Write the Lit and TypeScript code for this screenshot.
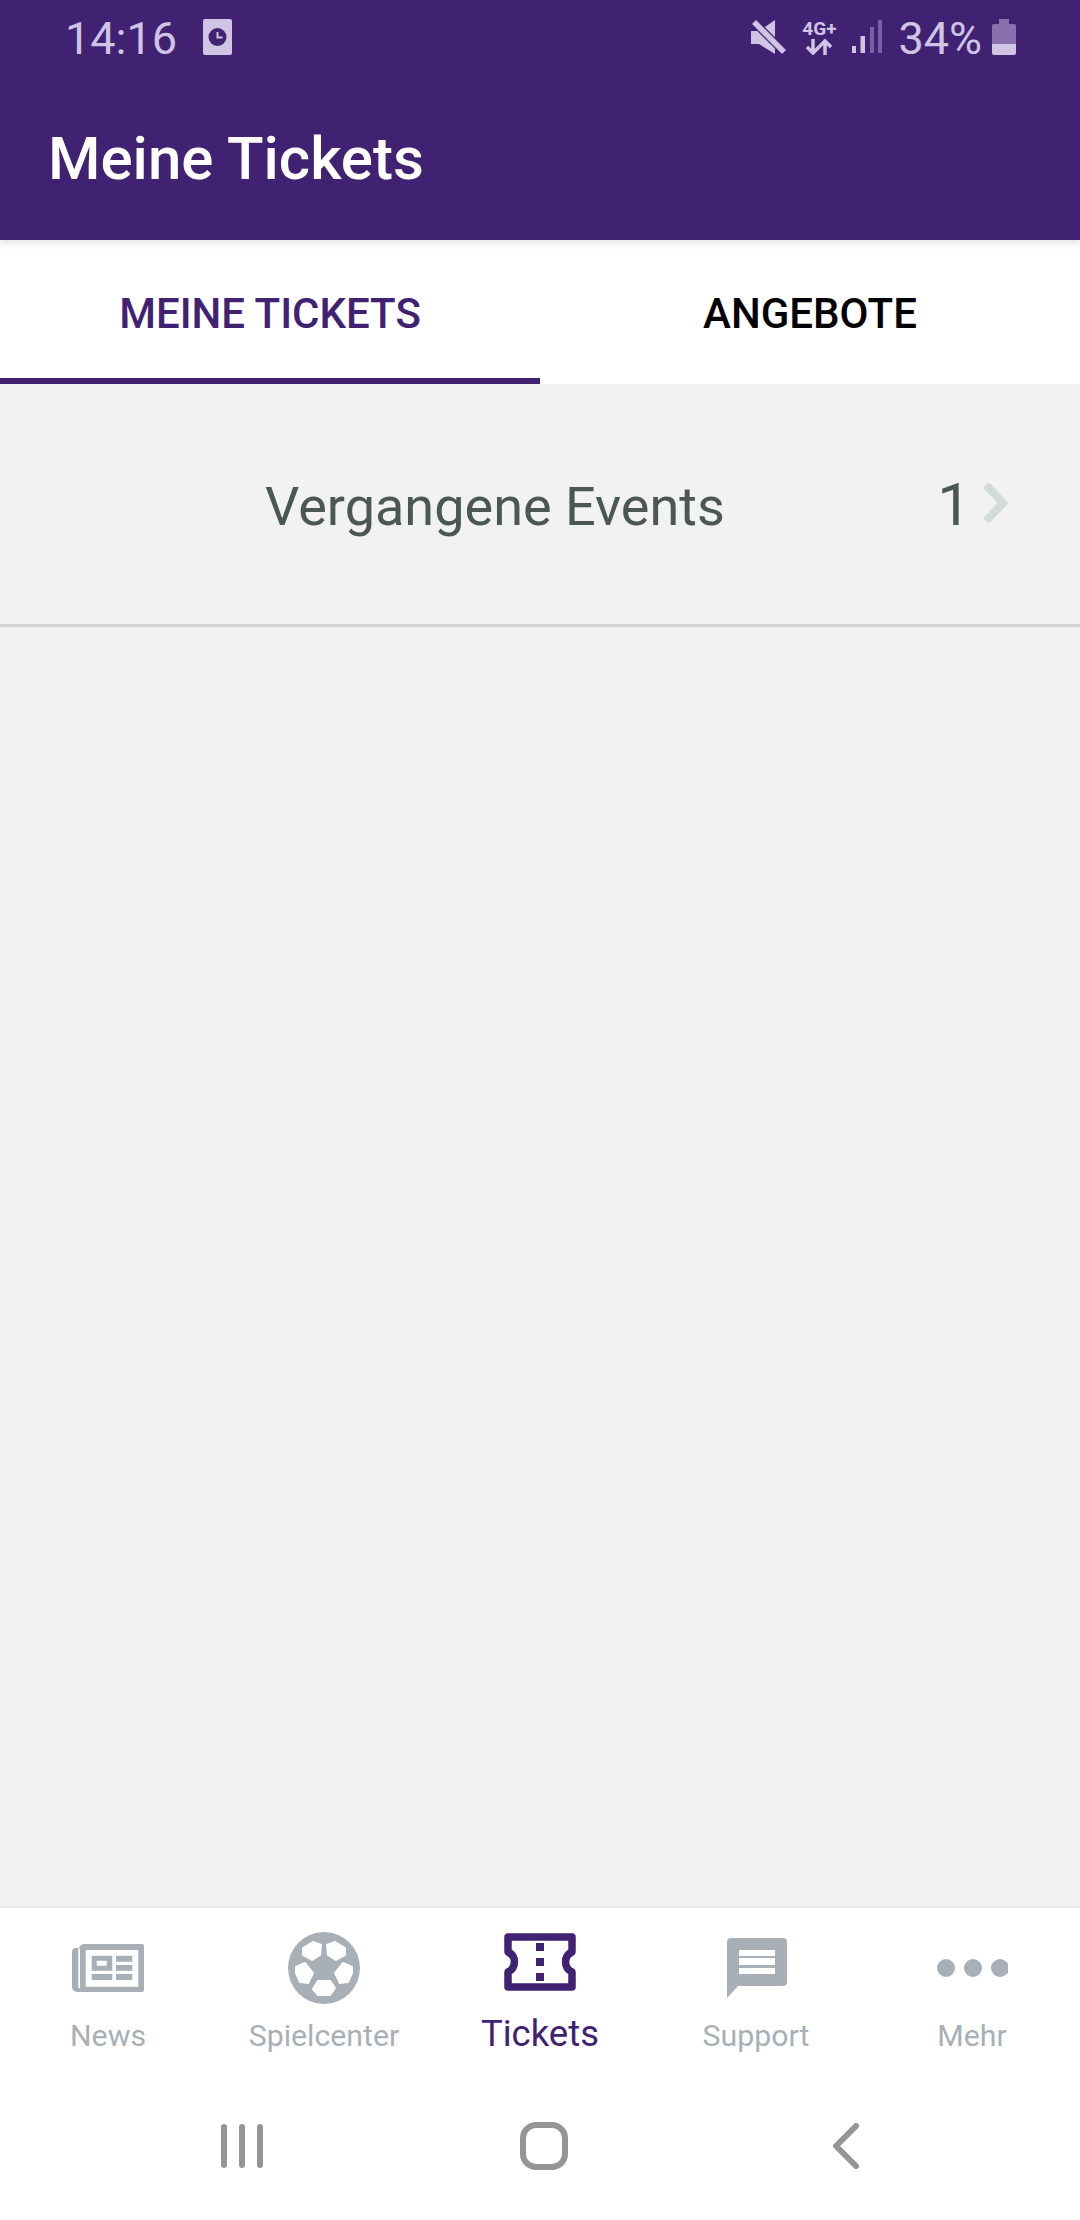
import { LitElement, html, css, svg } from "lit";
import { customElement } from "lit/decorators.js";

const news = svg`<path fill="currentColor" fill-rule="evenodd" d="M11 12H70a2 2 0 0 1 2 2V58a2 2 0 0 1-2 2H5a5 5 0 0 1-5-5V20a4 4 0 0 1 4-4H7Q8 13 11 12ZM6.3 16.5V56H8V16.5ZM13.7 18V54.7H66.3V18ZM19.7 23.7H40.3V38.7H19.7ZM24.7 28.7V33.7H34.7V28.7ZM44 23.7H60.3V29.7H44ZM44 33H60.3V38.7H44ZM19.7 42H40.3V48H19.7ZM44 42H60.3V48H44Z"/>`;
const ball = svg`<circle cx="36" cy="36" r="36" fill="currentColor"/>
<g fill="#fff" stroke="#fff" stroke-width="2" stroke-linejoin="round">
<polygon points="25,10 33,13 32,23 24,28 15,23 15,16"/>
<polygon points="47,10 39,13 40,23 48,28 57,23 57,16"/>
<polygon points="8,35 17,31 25,41 20,51 12,50 8,41"/>
<polygon points="64,35 55,31 47,41 52,51 60,50 64,41"/>
<polygon points="30,49 42,49 47,56 42,63 30,63 25,57"/>
</g>`;
const ticket = svg`<path fill="none" stroke="currentColor" stroke-width="7.5" stroke-linejoin="round" d="M4 5H68V20A11 11 0 0 0 68 40V55H4V40A11 11 0 0 0 4 20Z"/>
<g fill="currentColor"><rect x="32" y="11" width="8" height="8"/><rect x="32" y="26" width="8" height="8"/><rect x="32" y="41" width="8" height="8"/></g>`;
const support = svg`<path fill="currentColor" fill-rule="evenodd" transform="translate(1 0)" d="M10 6H62a4 4 0 0 1 4 4V50a4 4 0 0 1-4 4H17L6 66V10a4 4 0 0 1 4-4ZM18 18V24H54V18ZM18 26V33H54V26ZM18 36V42H54V36Z"/>`;
const more = svg`<g fill="currentColor"><circle cx="10" cy="36" r="9"/><circle cx="37" cy="36" r="9"/><circle cx="64" cy="36" r="9"/></g>`;

const items = [
  { label: "News", icon: news },
  { label: "Spielcenter", icon: ball },
  { label: "Tickets", icon: ticket, active: true },
  { label: "Support", icon: support },
  { label: "Mehr", icon: more },
];

@customElement("app-root")
export class AppRoot extends LitElement {
  static styles = css`
    :host {
      display: flex;
      flex-direction: column;
      width: 1080px;
      height: 2220px;
      background: #f2f2f2;
      font-family: Roboto, "Liberation Sans", sans-serif;
      overflow: hidden;
    }
    .header {
      background: #412272;
      height: 240px;
      flex: none;
      position: relative;
      z-index: 2;
      box-shadow: 0 3px 8px rgba(0, 0, 0, 0.12);
    }
    .status {
      display: flex;
      align-items: center;
      height: 38px;
      padding: 18px 64px 0 65px;
      color: #cfc4e3;
    }
    .time { font-size: 45px; font-weight: 400; line-height: 38px; margin-top: 3px; }
    .clock { margin-left: 26px; display: block; }
    .spacer { flex: 1; }
    .mute { display: block; margin-right: 14px; }
    .net { display: flex; flex-direction: column; align-items: center; width: 36px; margin-right: 14px; }
    .net span { font-size: 19px; font-weight: 700; line-height: 16px; margin-top: 2px; }
    .net svg { display: block; margin-top: 2px; }
    .signal { display: block; margin-right: 15px; }
    .pct { font-size: 45px; font-weight: 400; line-height: 38px; margin: 3px 10px 0 0; }
    .batt { display: block; }
    .title {
      margin: 0;
      padding: 68px 0 0 48px;
      color: #fff;
      font-size: 60px;
      font-weight: 500;
      line-height: 70px;
    }
    .tabs {
      flex: none;
      display: grid;
      grid-template-columns: 1fr 1fr;
      height: 144px;
      background: #fff;
    }
    .tab {
      display: flex;
      align-items: center;
      justify-content: center;
      padding: 46px 0 42px;
      box-sizing: border-box;
      font-size: 42px;
      font-weight: 500;
      color: #000;
      line-height: 48px;
    }
    .tab.on { color: #412272; border-bottom: 6px solid #412272; padding-bottom: 36px; }
    .content { flex: 1; }
    .row {
      display: flex;
      align-items: baseline;
      box-sizing: border-box;
      padding: 89px 71px 0 265px;
      border-bottom: 3px solid #d4d4d4;
      color: #4b5753;
      height: 243px;
    }
    .row .name { flex: 1; font-size: 54px; line-height: 64px; }
    .row .count { font-size: 60px; line-height: 64px; font-weight: 400; }
    .row .chev { display: block; margin-left: 11px; align-self: flex-start; margin-top: 10px; }
    .nav {
      flex: none;
      display: grid;
      grid-template-columns: repeat(5, 1fr);
      height: 192px;
      box-sizing: border-box;
      background: #fff;
      padding-top: 24px;
      box-shadow: 0 -1px 4px rgba(0, 0, 0, 0.06);
      position: relative;
    }
    .item {
      display: flex;
      flex-direction: column;
      align-items: center;
      color: #a9afb6;
    }
    .item svg { display: block; }
    .item .lbl { font-size: 30.3px; line-height: 36px; margin-top: 14px; }
    .item.on { color: #412272; }
    .item.on .lbl { font-size: 36.5px; line-height: 40px; margin-top: 10px; }
    .sys {
      flex: none;
      display: grid;
      grid-template-columns: repeat(3, 302px);
      justify-content: center;
      align-items: center;
      height: 120px;
      padding: 2px 0 30px 8px;
      box-sizing: border-box;
      background: #fff;
      color: #959595;
      position: relative;
    }
    .sys svg { display: block; justify-self: center; }
  `;

  render() {
    return html`
      <div class="header">
        <div class="status">
          <span class="time">14:16</span>
          <svg class="clock" width="29" height="36" viewBox="0 0 29 36">
            <rect width="29" height="36" rx="2" fill="#cfc4e3" />
            <circle cx="14.5" cy="18" r="9" fill="#412272" />
            <path d="M14.5 13v5.5h5" fill="none" stroke="#cfc4e3" stroke-width="2" />
          </svg>
          <span class="spacer"></span>
          <svg class="mute" width="36" height="36" viewBox="0 0 36 36">
            <path fill="#cfc4e3" d="M0 12H8L24 1V35L8 25H0Z" />
            <path stroke="#412272" stroke-width="8" d="M2 2L36 36" />
            <path stroke="#cfc4e3" stroke-width="5.5" d="M3 3L33 33" />
          </svg>
          <div class="net">
            <span>4G+</span>
            <svg width="26" height="16" viewBox="0 0 26 16" fill="none" stroke="#cfc4e3" stroke-width="3.5">
              <path d="M7 0V14M1 8L7 14L13 8" /><path d="M19 16V2M13 8L19 2L25 8" />
            </svg>
          </div>
          <svg class="signal" width="32" height="34" viewBox="0 0 32 34">
            <rect x="1" y="26" width="4" height="7" fill="#cfc4e3" />
            <rect x="9.5" y="16" width="4.5" height="17" fill="#cfc4e3" />
            <rect x="19" y="7" width="4" height="26" fill="#7c5fa3" />
            <rect x="27" y="0" width="4" height="33" fill="#7c5fa3" />
          </svg>
          <span class="pct">34%</span>
          <svg class="batt" width="24" height="36" viewBox="0 0 24 36">
            <path fill="#8a6fae" d="M7 0H17V5H22a2 2 0 0 1 2 2V25H0V7a2 2 0 0 1 2-2H7Z" />
            <path fill="#cfc4e3" d="M0 25H24V34a2 2 0 0 1-2 2H2a2 2 0 0 1-2-2Z" />
          </svg>
        </div>
        <h1 class="title">Meine Tickets</h1>
      </div>
      <div class="tabs">
        <div class="tab on">MEINE TICKETS</div>
        <div class="tab">ANGEBOTE</div>
      </div>
      <div class="content">
        <div class="row">
          <span class="name">Vergangene Events</span>
          <span class="count">1</span>
          <svg class="chev" width="27" height="40" viewBox="0 0 27 40">
            <path d="M4 2L21 20L4 38" fill="none" stroke="#d3dbd8" stroke-width="8" />
          </svg>
        </div>
      </div>
      <div class="nav">
        ${items.map(
          (i) => html`<div class="item ${i.active ? "on" : ""}">
            <svg width="72" height="72" viewBox="0 0 72 72">${i.icon}</svg>
            <span class="lbl">${i.label}</span>
          </div>`
        )}
      </div>
      <div class="sys">
        <svg width="44" height="46" viewBox="0 0 44 46" fill="none" stroke="currentColor" stroke-width="6" stroke-linecap="round">
          <path d="M4 4V42M22 4V42M40 4V42" />
        </svg>
        <svg width="48" height="48" viewBox="0 0 48 48">
          <rect x="3" y="3" width="42" height="42" rx="13" fill="none" stroke="currentColor" stroke-width="6" />
        </svg>
        <svg width="26" height="46" viewBox="0 0 26 46" fill="none" stroke="currentColor" stroke-width="6" stroke-linecap="round" stroke-linejoin="round">
          <path d="M23 3L3 23L23 43" />
        </svg>
      </div>
    `;
  }
}
